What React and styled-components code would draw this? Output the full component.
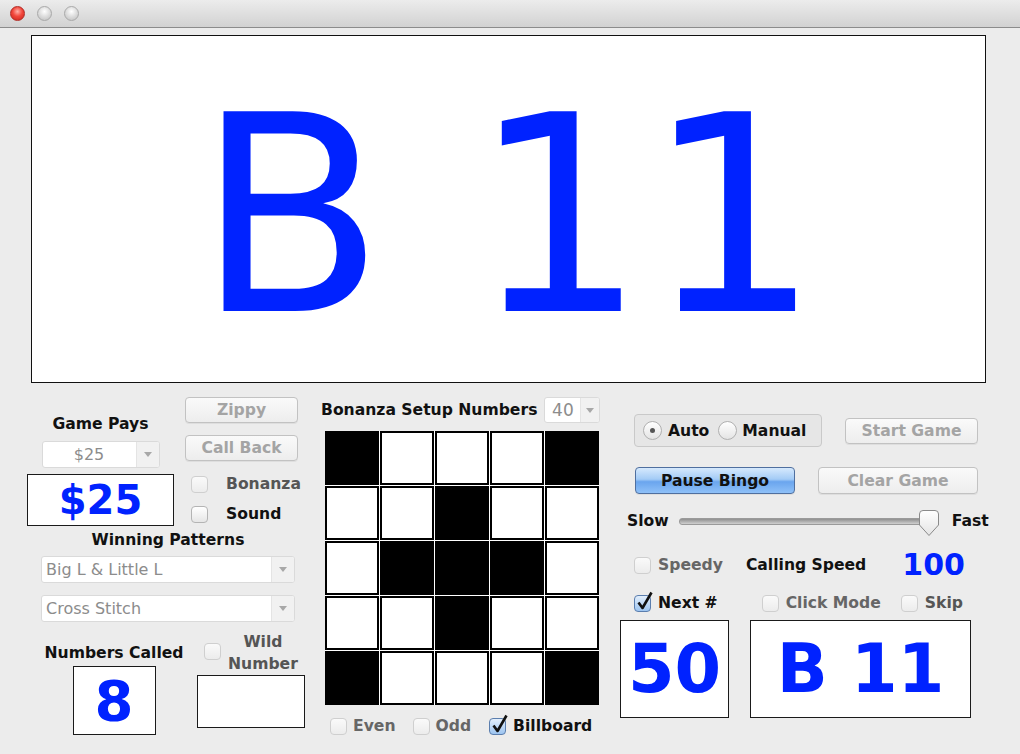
import React from 'react';
import styled, { createGlobalStyle } from 'styled-components';

const blue = '#0022ff';
const font = '"DejaVu Sans", "Liberation Sans", sans-serif';

const GlobalStyle = createGlobalStyle`
  html, body {
    margin: 0;
    padding: 0;
    background: #ececec;
  }
  body {
    font-family: ${font};
  }
`;

const Window = styled.div`
  width: 1020px;
  height: 754px;
  background: #ececec;
  display: flex;
  flex-direction: column;
  overflow: hidden;
`;

const TitleBar = styled.div`
  height: 27px;
  flex: none;
  display: flex;
  align-items: center;
  gap: 12px;
  padding-left: 10px;
  background: linear-gradient(#ececec, #d2d2d2);
  border-bottom: 1px solid #8c8c8c;
`;

const Light = styled.div`
  width: 15px;
  height: 15px;
  border-radius: 50%;
  box-sizing: border-box;
  border: 1px solid ${p => (p.$red ? '#b22a24' : '#a9a9a9')};
  background: ${p =>
    p.$red
      ? 'radial-gradient(circle at 50% 35%, #ffb0a8 0%, #f2473c 45%, #c8231b 100%)'
      : 'radial-gradient(circle at 50% 35%, #ffffff 0%, #dcdcdc 50%, #bdbdbd 100%)'};
`;

const Display = styled.div`
  margin: 7px 0 0 31px;
  width: 955px;
  height: 348px;
  box-sizing: border-box;
  border: 1px solid #111;
  background: #fff;
  display: flex;
  align-items: center;
  justify-content: center;
  color: ${blue};
  font-family: "DejaVu Sans", sans-serif;
  font-size: 274px;
  line-height: 1;
  white-space: pre;
  padding-top: 16px;
`;

const Bottom = styled.div`
  display: flex;
  padding-left: 27px;
`;

const Column = styled.div`
  width: ${p => p.$w}px;
  margin-right: ${p => p.$mr || 0}px;
  display: flex;
  flex-direction: column;
  flex: none;
`;

const Row = styled.div`
  display: flex;
  align-items: ${p => p.$align || 'center'};
  margin-top: ${p => p.$mt || 0}px;
  margin-left: ${p => p.$ml || 0}px;
  height: ${p => (p.$h ? `${p.$h}px` : 'auto')};
`;

const Stack = styled.div`
  display: flex;
  flex-direction: column;
  align-items: ${p => p.$align || 'flex-start'};
  width: ${p => p.$w}px;
  margin-left: ${p => p.$ml || 0}px;
  margin-top: ${p => p.$mt || 0}px;
  flex: none;
`;

const Label = styled.div`
  font-family: ${font};
  font-weight: bold;
  font-size: 15.6px;
  line-height: ${p => p.$lh || 18}px;
  color: ${p => p.$color || '#111'};
  margin-top: ${p => p.$mt || 0}px;
  margin-left: ${p => p.$ml || 0}px;
  text-align: center;
  white-space: nowrap;
`;

const SpeedValue = styled(Label)`
  color: ${blue};
  font-size: 30px;
  line-height: 24px;
`;

const NumberBox = styled.div`
  width: ${p => p.$w}px;
  height: ${p => p.$h}px;
  margin-top: ${p => p.$mt || 0}px;
  margin-left: ${p => p.$ml || 0}px;
  box-sizing: border-box;
  border: 1.5px solid #1a1a1a;
  background: #fff;
  display: flex;
  align-items: center;
  justify-content: center;
  color: ${blue};
  font-family: ${font};
  font-weight: bold;
  font-size: ${p => p.$size || 40}px;
  line-height: 1;
  white-space: pre;
  flex: none;
`;

const Button = styled.div`
  width: ${p => p.$w}px;
  height: ${p => p.$h || 26}px;
  margin-top: ${p => p.$mt || 0}px;
  margin-left: ${p => p.$ml || 0}px;
  box-sizing: border-box;
  border-radius: 4px;
  border: 1px solid ${p => (p.$primary ? '#4f6f9f' : '#c2c2c2')};
  background: ${p =>
    p.$primary
      ? 'linear-gradient(#d6e9fd 0%, #a3cbf6 45%, #6aa5ee 55%, #8fc1f8 100%)'
      : 'linear-gradient(#fafafa, #ededed)'};
  box-shadow: 0 1px 0 rgba(0, 0, 0, 0.06);
  display: flex;
  align-items: center;
  justify-content: center;
  font-family: ${font};
  font-weight: bold;
  font-size: 15.6px;
  color: ${p => (p.$primary ? '#111' : '#a4a4a4')};
  flex: none;
`;

const Combo = styled.div`
  width: ${p => p.$w}px;
  height: ${p => p.$h || 27}px;
  margin-top: ${p => p.$mt || 0}px;
  margin-left: ${p => p.$ml || 0}px;
  box-sizing: border-box;
  border: 1px solid #dadada;
  border-radius: 3px;
  background: #fff;
  display: flex;
  flex: none;
  overflow: hidden;
`;

const ComboText = styled.div`
  flex: 1;
  display: flex;
  align-items: center;
  justify-content: ${p => (p.$center ? 'center' : 'flex-start')};
  padding-left: ${p => (p.$center ? 0 : 4)}px;
  font-family: ${font};
  font-size: ${p => p.$size || 16}px;
  color: #8c8c8c;
  white-space: nowrap;
`;

const ComboArrow = styled.div`
  width: ${p => p.$w || 22}px;
  background: #f1f1f1;
  border-left: 1px solid #e4e4e4;
  display: flex;
  align-items: center;
  justify-content: center;
  &::after {
    content: '';
    border-left: 4px solid transparent;
    border-right: 4px solid transparent;
    border-top: 5px solid #a8a8a8;
  }
`;

const Box = styled.div`
  width: 17px;
  height: 17px;
  box-sizing: border-box;
  border-radius: 4px;
  border: 1px solid ${p => (p.$checked ? '#5b7eae' : p.$dim ? '#cfcfcf' : '#b4b4b4')};
  background: ${p =>
    p.$checked
      ? 'linear-gradient(#e3effc, #9cc4f0)'
      : p.$dim
      ? 'linear-gradient(#fafafa, #ececec)'
      : 'linear-gradient(#ffffff, #e6e6e6)'};
  position: relative;
  flex: none;
  margin-left: ${p => p.$ml || 0}px;
  margin-top: ${p => p.$mt || 0}px;
`;

const Tick = styled.svg`
  position: absolute;
  left: 1px;
  top: -5px;
`;

const CheckBox = ({ checked, dim, ml, mt }) => (
  <Box $checked={checked} $dim={dim} $ml={ml} $mt={mt}>
    {checked && (
      <Tick width="18" height="20" viewBox="0 0 18 20">
        <path d="M2.5 11.5 L6.5 17 L15.5 1.5" fill="none" stroke="#111" strokeWidth="2.6" strokeLinejoin="round" />
      </Tick>
    )}
  </Box>
);

const PatternGrid = styled.div`
  margin: 8px 0 0 4px;
  width: 274px;
  height: 274px;
  display: grid;
  grid-template-columns: repeat(5, 1fr);
  grid-template-rows: repeat(5, 1fr);
  gap: 1px;
  background: #fff;
`;

const Cell = styled.div`
  box-sizing: border-box;
  border: 2px solid #000;
  background: ${p => (p.$on ? '#000' : '#fff')};
`;

const RadioGroup = styled.div`
  width: 188px;
  height: 33px;
  margin-left: 14px;
  box-sizing: border-box;
  border: 1px solid #c9c9c9;
  border-radius: 4px;
  background: #e6e6e6;
  display: flex;
  align-items: center;
  padding-left: 8px;
  flex: none;
`;

const Radio = styled.div`
  width: 19px;
  height: 19px;
  box-sizing: border-box;
  border-radius: 50%;
  border: 1px solid #b0b0b0;
  background: linear-gradient(#ffffff, #e4e4e4);
  display: flex;
  align-items: center;
  justify-content: center;
  margin-left: ${p => p.$ml || 0}px;
  flex: none;
  &::after {
    content: '';
    display: ${p => (p.$on ? 'block' : 'none')};
    width: 5px;
    height: 5px;
    border-radius: 50%;
    background: #555;
  }
`;

const Track = styled.div`
  width: 257px;
  height: 5px;
  margin-left: 10px;
  border-radius: 3px;
  border: 1px solid #9a9a9a;
  background: linear-gradient(#8f8f8f, #d0d0d0);
  position: relative;
  flex: none;
`;

const Thumb = styled.svg`
  position: absolute;
  left: 238px;
  top: -10px;
`;

const cells = [
  1, 0, 0, 0, 1,
  0, 0, 1, 0, 0,
  0, 1, 1, 1, 0,
  0, 0, 1, 0, 0,
  1, 0, 0, 0, 1,
];

const App = () => (
  <Window>
    <GlobalStyle />
    <TitleBar>
      <Light $red />
      <Light />
      <Light />
    </TitleBar>

    <Display>B 11</Display>

    <Bottom>
      <Column $w={278} $mr={16}>
        <Row $mt={14} $align="flex-start">
          <Stack $w={147} $align="center">
            <Label $mt={18}>Game Pays</Label>
            <Combo $w={118} $mt={8}>
              <ComboText $center>$25</ComboText>
              <ComboArrow />
            </Combo>
            <NumberBox $w={147} $h={52} $mt={6} $size={40}>$25</NumberBox>
          </Stack>
          <Stack $w={113} $ml={11}>
            <Button $w={113}>Zippy</Button>
            <Button $w={113} $mt={12}>Call Back</Button>
            <Row $mt={14} $h={18}>
              <CheckBox dim ml={6} />
              <Label $ml={18} $color="#555">Bonanza</Label>
            </Row>
            <Row $mt={12} $h={18}>
              <CheckBox ml={6} />
              <Label $ml={18}>Sound</Label>
            </Row>
          </Stack>
        </Row>
        <Label $mt={5} $ml={14} style={{ width: 254 }}>Winning Patterns</Label>
        <Combo $w={254} $ml={14} $mt={7}>
          <ComboText>Big L &amp; Little L</ComboText>
          <ComboArrow />
        </Combo>
        <Combo $w={254} $ml={14} $mt={12}>
          <ComboText>Cross Stitch</ComboText>
          <ComboArrow />
        </Combo>
        <Row $align="flex-start">
          <Stack $w={144} $ml={15} $mt={22} $align="center">
            <Label>Numbers Called</Label>
            <NumberBox $w={83} $h={69} $mt={4} $size={56}>8</NumberBox>
          </Stack>
          <Stack $w={108} $ml={11} $mt={9}>
            <Row $align="flex-start">
              <CheckBox dim ml={7} mt={12} />
              <Label $lh={22} $ml={7} $color="#555">Wild<br />Number</Label>
            </Row>
            <NumberBox $w={108} $h={53} />
          </Stack>
        </Row>
      </Column>

      <Column $w={281} $mr={18}>
        <Row $mt={14} $h={26}>
          <Label>Bonanza Setup Numbers</Label>
          <Combo $w={56} $h={26} $ml={7}>
            <ComboText $center $size={17}>40</ComboText>
            <ComboArrow $w={18} />
          </Combo>
        </Row>
        <PatternGrid>
          {cells.map((c, i) => (
            <Cell key={i} $on={c === 1} />
          ))}
        </PatternGrid>
        <Row $mt={12} $h={18}>
          <CheckBox dim ml={9} />
          <Label $ml={6} $color="#666">Even</Label>
          <CheckBox dim ml={17} />
          <Label $ml={6} $color="#666">Odd</Label>
          <CheckBox checked ml={18} />
          <Label $ml={7}>Billboard</Label>
        </Row>
      </Column>

      <Column $w={366}>
        <Row $mt={31} $h={33}>
          <RadioGroup>
            <Radio $on />
            <Label $ml={6}>Auto</Label>
            <Radio $ml={9} />
            <Label $ml={5}>Manual</Label>
          </RadioGroup>
          <Button $w={133} $ml={23}>Start Game</Button>
        </Row>
        <Row $mt={20} $h={27}>
          <Button $primary $w={160} $h={27} $ml={15}>Pause Bingo</Button>
          <Button $w={160} $h={27} $ml={23}>Clear Game</Button>
        </Row>
        <Row $mt={16} $h={22}>
          <Label $ml={7}>Slow</Label>
          <Track>
            <Thumb width="22" height="28" viewBox="0 0 22 28">
              <defs>
                <linearGradient id="thumbFill" x1="0" y1="0" x2="0" y2="1">
                  <stop offset="0" stopColor="#ffffff" />
                  <stop offset="1" stopColor="#e4e4e4" />
                </linearGradient>
              </defs>
              <path d="M1.5 5 Q1.5 1.5 5 1.5 H17 Q20.5 1.5 20.5 5 V16 L11 26.5 L1.5 16 Z" fill="url(#thumbFill)" stroke="#8a8a8a" strokeWidth="1" />
            </Thumb>
          </Track>
          <Label $ml={14}>Fast</Label>
        </Row>
        <Row $mt={21} $h={24}>
          <CheckBox dim ml={14} />
          <Label $ml={7} $color="#666">Speedy</Label>
          <Label $ml={23}>Calling Speed</Label>
          <SpeedValue $ml={36}>100</SpeedValue>
        </Row>
        <Row $mt={17} $h={18}>
          <CheckBox checked ml={14} />
          <Label $ml={7}>Next #</Label>
          <CheckBox dim ml={44} />
          <Label $ml={7} $color="#666">Click Mode</Label>
          <CheckBox dim ml={20} />
          <Label $ml={7} $color="#555">Skip</Label>
        </Row>
        <Row $mt={8} $align="flex-start">
          <NumberBox $w={109} $h={98} $size={67}>50</NumberBox>
          <NumberBox $w={221} $h={98} $ml={21} $size={67}>B 11</NumberBox>
        </Row>
      </Column>
    </Bottom>
  </Window>
);

export default App;
